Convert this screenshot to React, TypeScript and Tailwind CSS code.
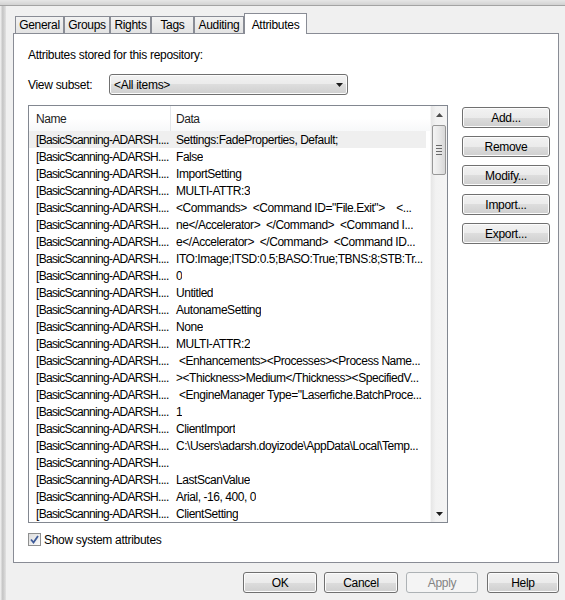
import React from "react";

const names = "[BasicScanning-ADARSH....";
const data: string[] = [
  "Settings:FadeProperties, Default;",
  "False",
  "ImportSetting",
  "MULTI-ATTR:3",
  '<Commands>  <Command ID="File.Exit">    <...',
  "ne</Accelerator>  </Command>  <Command I...",
  "e</Accelerator>  </Command>  <Command ID...",
  "ITO:Image;ITSD:0.5;BASO:True;TBNS:8;STB:Tr...",
  "0",
  "Untitled",
  "AutonameSetting",
  "None",
  "MULTI-ATTR:2",
  " <Enhancements><Processes><Process Name...",
  "><Thickness>Medium</Thickness><SpecifiedV...",
  ' <EngineManager Type="Laserfiche.BatchProce...',
  "1",
  "ClientImport",
  "C:\\Users\\adarsh.doyizode\\AppData\\Local\\Temp...",
  "",
  "LastScanValue",
  "Arial, -16, 400, 0",
  "ClientSetting",
];

const btn =
  "h-[21px] rounded-[3px] border border-[#707070] bg-[linear-gradient(#f2f2f2_0%,#ebebeb_50%,#dddddd_50%,#cfcfcf_100%)] text-black flex items-center justify-center shadow-[inset_0_0_0_1px_#fcfcfc]";

function Tab({ label, w, selected }: { label: string; w: string; selected?: boolean }) {
  if (selected) {
    return (
      <div className={`${w} h-[21px] border border-b-0 border-[#898c95] bg-white flex items-start justify-center pt-[2px]`}>
        {label}
      </div>
    );
  }
  return (
    <div
      className={`${w} h-[18px] border border-[#898c95] bg-[linear-gradient(#f2f2f2,#e3e3e3)] flex items-center justify-center`}
    >
      {label}
    </div>
  );
}

function Tri({ down = true }: { down?: boolean }) {
  return (
    <svg width="7" height="4" viewBox="0 0 7 4">
      {down ? <polygon points="0,0 7,0 3.5,4" fill="#1c1c1c" /> : <polygon points="0,4 7,4 3.5,0" fill="#4d4d4d" />}
    </svg>
  );
}

export default function App() {
  return (
    <div className="w-[565px] h-[600px] bg-[#f0f0f0] flex flex-col overflow-hidden text-[12px] tracking-[-0.3px] text-black font-['Liberation_Sans',Arial,sans-serif]">
      <div className="h-[5px] bg-[linear-gradient(#e6e6e6,#d2d2d2)]" />
      <div className="h-px bg-[#a3a3a3]" />
      <div className="flex flex-1">
        <div className="w-[6px] bg-[linear-gradient(to_right,#f4f4f4,#c4c4c4_45%,#e2e2e2)]" />
        <div className="flex flex-col">
          <div className="mt-[7px] ml-[9px] flex items-end h-[21px] -mb-px relative z-10">
            <Tab label="General" w="w-[49px]" />
            <Tab label="Groups" w="w-[46px]" />
            <Tab label="Rights" w="w-[41px]" />
            <Tab label="Tags" w="w-[43px]" />
            <Tab label="Auditing" w="w-[50px]" />
            <Tab label="Attributes" w="w-[63px]" selected />
          </div>
          <div className="ml-[7px] w-[546px] h-[530px] border border-[#898c95] bg-white flex flex-col pl-[14px] pt-[13px]">
            <div className="h-[16px] leading-[16px]">Attributes stored for this repository:</div>
            <div className="mt-[11px] flex items-center h-[21px]">
              <div className="w-[81px]">View subset:</div>
              <div className={`${btn} w-[239px] !justify-between pl-[4px] pr-[4px]`}>
                <span>&lt;All items&gt;</span>
                <Tri />
              </div>
            </div>
            <div className="mt-[10px] flex">
              <div className="w-[420px] h-[418px] border border-[#828790] flex bg-white">
                <div className="flex-1 flex flex-col overflow-hidden tracking-[-0.45px]">
                  <div className="h-[25px] flex shrink-0 bg-[linear-gradient(#ffffff_0%,#ffffff_50%,#f7f8f9_100%)]">
                    <div className="w-[142px] pl-[7px] flex items-center border-r border-[#e3e6ea] text-[#1e1e1e]">Name</div>
                    <div className="pl-[5px] flex items-center text-[#1e1e1e]">Data</div>
                  </div>
                  {data.map((d, i) => (
                    <div
                      key={i}
                      className={`h-[17px] shrink-0 flex items-center whitespace-pre ${i === 0 ? "bg-[#efefef] mr-[4px]" : ""}`}
                    >
                      <div className="w-[142px] shrink-0 pl-[7px] overflow-hidden tracking-[-0.7px]">{names}</div>
                      <div className="pl-[5px] overflow-hidden">{d}</div>
                    </div>
                  ))}
                </div>
                <div className="w-[17px] flex flex-col bg-[linear-gradient(to_right,#e6e6e6,#f2f2f2_30%,#f4f4f4)] border-l border-[#f6f6f6]">
                  <div className="h-[17px] flex items-center justify-center">
                    <Tri down={false} />
                  </div>
                  <div className="mt-[2px] ml-px w-[14px] h-[50px] rounded-[2px] border border-[#979797] bg-[linear-gradient(to_right,#f4f4f4,#e8e8e8_50%,#d8d8d8)] flex flex-col items-center justify-center gap-[2px]">
                    <div className="w-[6px] h-px bg-[#6a6a6a]" />
                    <div className="w-[6px] h-px bg-[#6a6a6a]" />
                    <div className="w-[6px] h-px bg-[#6a6a6a]" />
                    <div className="w-[6px] h-px bg-[#6a6a6a]" />
                  </div>
                  <div className="flex-1" />
                  <div className="h-[17px] flex items-center justify-center">
                    <Tri />
                  </div>
                </div>
              </div>
              <div className="ml-[14px] mt-[2px] flex flex-col gap-[8px]">
                <div className={`${btn} w-[88px]`}>Add...</div>
                <div className={`${btn} w-[88px]`}>Remove</div>
                <div className={`${btn} w-[88px]`}>Modify...</div>
                <div className={`${btn} w-[88px]`}>Import...</div>
                <div className={`${btn} w-[88px]`}>Export...</div>
              </div>
            </div>
            <div className="mt-[10px] flex items-center h-[13px]">
              <div className="w-[13px] h-[13px] border border-[#8e8f8f] bg-[linear-gradient(135deg,#dcdcdc,#fbfbfb)] flex items-center justify-center">
                <svg width="9" height="9" viewBox="0 0 9 9">
                  <path d="M1 4.5 L3.5 7.5 L8 1" stroke="#3d5a98" strokeWidth="1.8" fill="none" />
                </svg>
              </div>
              <span className="ml-[3px]">Show system attributes</span>
            </div>
          </div>
          <div className="mt-[9px] ml-[7px] w-[546px] flex justify-end">
            <div className={`${btn} w-[74px]`}>OK</div>
            <div className={`${btn} w-[74px] ml-[7px]`}>Cancel</div>
            <div className="h-[21px] w-[72px] ml-[8px] rounded-[3px] border border-[#adb2b5] bg-[#f4f4f4] text-[#838383] flex items-center justify-center">
              Apply
            </div>
            <div className={`${btn} w-[72px] ml-[9px]`}>Help</div>
          </div>
        </div>
      </div>
    </div>
  );
}
